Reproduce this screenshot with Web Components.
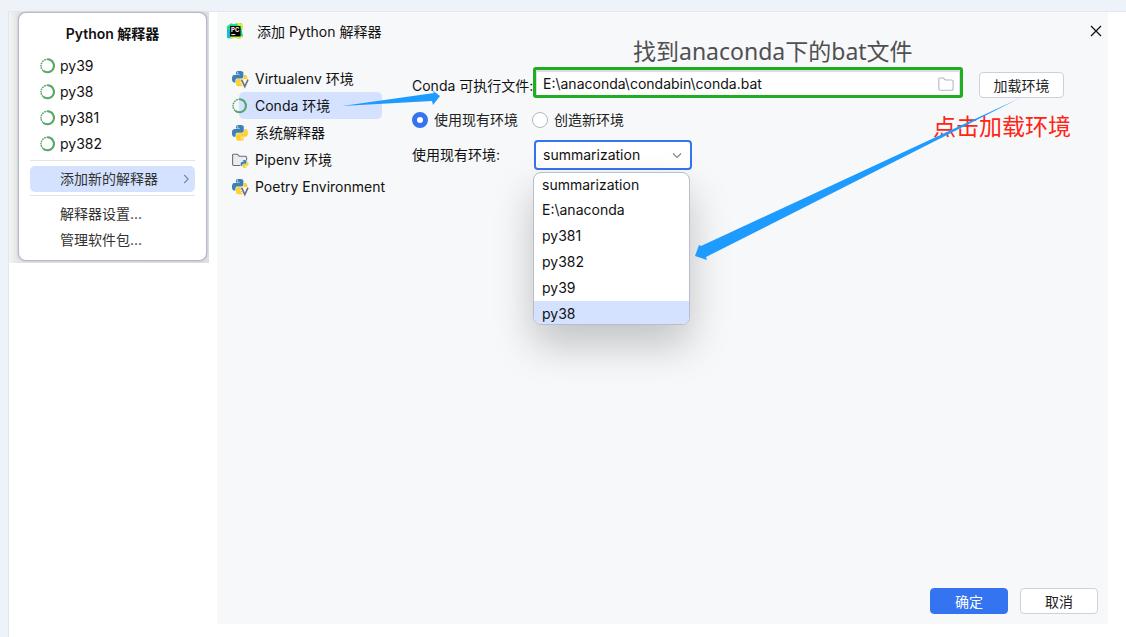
<!DOCTYPE html>
<html lang="zh-CN">
<head>
<meta charset="utf-8">
<meta name="viewport" content="width=device-width, initial-scale=1">
<title>添加 Python 解释器</title>
<style>
  body { margin: 0; font: 14px/20px Inter, "Noto Sans CJK SC", sans-serif; color: #111; }
</style>
</head>
<body>
<guide-page>
  <interpreter-menu slot="menu"></interpreter-menu>
  <interpreter-dialog slot="dialog"></interpreter-dialog>
</guide-page>

<script>
const define = (name, html, setup) => {
  const tpl = document.createElement('template');
  tpl.innerHTML = html;
  customElements.define(name, class extends HTMLElement {
    constructor() {
      super();
      this.attachShadow({ mode: 'open' }).append(tpl.content.cloneNode(true));
    }
    connectedCallback() { if (setup) setup(this, this.shadowRoot); }
  });
};

/* ---------- icons ---------- */
const SNAKE = 'M14.25.18l.9.2.73.26.59.3.45.32.34.34.25.34.16.33.1.3.04.26.02.2-.01.13V8.5l-.05.63-.13.55-.21.46-.26.38-.3.31-.33.25-.35.19-.35.14-.33.1-.3.07-.26.04-.21.02H8.77l-.69.05-.59.14-.5.22-.41.27-.33.32-.27.35-.2.36-.15.37-.1.35-.07.32-.04.27-.02.21v3.06H3.17l-.21-.03-.28-.07-.32-.12-.35-.18-.36-.26-.36-.36-.35-.46-.32-.59-.28-.73-.21-.88-.14-1.05-.05-1.23.06-1.22.16-1.04.24-.87.32-.71.36-.57.4-.44.42-.33.42-.24.4-.16.36-.1.32-.05.24-.01h.16l.06.01h8.16v-.83H6.18l-.01-2.75-.02-.37.05-.34.11-.31.17-.28.25-.26.31-.23.38-.2.44-.18.51-.15.58-.12.64-.1.71-.06.77-.04.84-.02 1.27.05zm-6.3 1.98l-.23.33-.08.41.08.41.23.34.33.22.41.09.41-.09.33-.22.23-.34.08-.41-.08-.41-.23-.33-.33-.22-.41-.09-.41.09z';
const python = t => `<g transform="${t}"><path fill="#3f7fb5" d="${SNAKE}"/><path fill="#ffd02e" transform="rotate(180 12 12)" d="${SNAKE}"/></g>`;
const ICONS = {
  conda: `<circle cx="7.500" cy="7.800" r="6.500" fill="none" stroke="#59a869" stroke-width="1.500" stroke-dasharray="1.700 .7"/>
    <path d="M7.500 1.300a6.500 6.500 0 1 1-4.200 11.500" fill="none" stroke="#59a869" stroke-width="2"/>`,
  python: python('scale(.66)'),
  venv: python('scale(.64)') + `<path d="M8.400 8h8v8.500h-5z" fill="#f7f8fa"/><path d="M9.600 8.700l3.200 7 3.200-7" fill="none" stroke="#6c707e" stroke-width="1.600"/>`,
  pipenv: `<path d="M.6 12.5V3.2a1 1 0 0 1 1-1H5.300l2 2h6.100a1.200 1.200 0 0 1 1.200 1.200V13.500h-13a1 1 0 0 1-1-1z" fill="#ebecf0" stroke="#6c707e" stroke-width="1.1"/><circle cx="12.500" cy="12" r="4.300" fill="#f7f8fa"/>` + python('translate(8.600 8) scale(.33)'),
  folder: `<path d="M.8 13V3.300a1.300 1.300 0 0 1 1.300-1.300h3.300l2 2h6.200a1.500 1.500 0 0 1 1.500 1.500V12.700a1.500 1.500 0 0 1-1.500 1.500H2.200A1.400 1.400 0 0 1 .8 13z" fill="#fff" stroke="#b4b8c4" stroke-width="1.1"/>`,
  chevron: `<path d="M4 6.500l4 4 4-4" fill="none" stroke="#818594" stroke-width="1.100"/>`,
  right: `<path d="M6.200 4l4 4-4 4" fill="none" stroke="#818594" stroke-width="1.100"/>`,
  close: `<path d="M3 3l10 10M13 3L3 13" fill="none" stroke="#111" stroke-width="1.300"/>`,
  pycharm: `<path d="M0 3.500L4 .2l3 1L10 0l5 .5.5 4-.7 3L16 13l-3.500 3-4-1.500L4 15.500 0 15z" fill="#21d789"/><path d="M0 7h5v6L1 15.500z" fill="#16b6e0"/><path d="M9 0h3.500l3 1.500V7L13 4zM3 13h11l2 .5-3.500 2.500-4-1.500L4 15.800z" fill="#d8ee3c"/><rect x="3" y="3" width="10.500" height="10.500" fill="#000"/>
    <text x="4" y="8.600" font-family="Inter, sans-serif" font-weight="700" font-size="6" fill="#fff">PC</text><path d="M4.300 11.600h4" stroke="#fff"/>`
};
define('ui-icon', `<style>:host{display:block;flex:none;width:16px;height:16px}svg{display:block;width:16px;height:16px;overflow:visible}</style><svg viewBox="0 0 16 16" aria-hidden="true"></svg>`,
  (el, root) => { root.querySelector('svg').innerHTML = ICONS[el.getAttribute('name')]; });

/* ---------- page frame ---------- */
define('guide-page', `
<style>
  :host { display: block; box-sizing: border-box; min-height: 100vh; padding: 11px 0 0 8px; background: #eef3f9; }
  main { display: flex; align-items: stretch; gap: 8px; box-sizing: border-box; min-height: calc(100vh - 11px);
    padding: 0 18px 13px 0; background: #fff; border: solid #e0e7ee; border-width: 1px 0 0 1px; }
</style>
<main><slot name="menu"></slot><slot name="dialog"></slot></main>`);

/* ---------- interpreter popup ---------- */
define('menu-item', `
<style>
  :host { display: block; }
  button { display: flex; align-items: center; gap: 4px; width: 100%; height: 26px; padding: 0 1px 0 10px; border: 0;
    border-radius: 5px; background: none; font: inherit; color: inherit; text-align: left; white-space: nowrap; }
  :host([plain]) button { padding-left: 30px; color: #333; }
  :host([active]) button { background: #d4e2ff; }
  span { flex: 1; }
</style>
<button type="button"><slot name="icon"></slot><span><slot></slot></span><slot name="end"></slot></button>`);

define('interpreter-menu', `
<style>
  :host { display: block; flex: none; align-self: flex-start; box-sizing: border-box; width: 200px; padding: 0 2px 2px 9px;
    background: linear-gradient(90deg, #f4f4f4, #e4e4e5 9px, #dedfe2); }
  nav { box-sizing: border-box; padding: 0 11px 7px; border: 1px solid #b6bac9; border-radius: 8px; background: #fff;
    box-shadow: 0 0 2px #a9adbb; }
  h2 { margin: 0; font-size: 14px; line-height: 20px; padding: 11px 0 9px; font-weight: 600; text-align: center; }
  hr { height: 1px; margin: 3px 0 5px; border: 0; background: #e4e5ea; }
</style>
<nav aria-label="Python 解释器">
  <h2>Python 解释器</h2>
  <menu-item><ui-icon slot="icon" name="conda"></ui-icon>py39</menu-item>
  <menu-item><ui-icon slot="icon" name="conda"></ui-icon>py38</menu-item>
  <menu-item><ui-icon slot="icon" name="conda"></ui-icon>py381</menu-item>
  <menu-item><ui-icon slot="icon" name="conda"></ui-icon>py382</menu-item>
  <hr>
  <menu-item plain active>添加新的解释器<ui-icon slot="end" name="right"></ui-icon></menu-item>
  <hr>
  <menu-item plain>解释器设置...</menu-item>
  <menu-item plain>管理软件包...</menu-item>
</nav>`);

/* ---------- dialog parts ---------- */
define('env-tab', `
<style>
  :host { display: block; }
  a { display: flex; align-items: center; gap: 7px; height: 27px; margin-left: 7px; border-radius: 5px; color: #111;
    text-decoration: none; white-space: nowrap; }
  :host([active]) a { background: #d4e2ff; }
  ui-icon { margin-left: -7px; }
</style>
<a href="#"><ui-icon></ui-icon><slot></slot></a>`,
  (el, root) => {
    const icon = document.createElement('ui-icon');
    icon.setAttribute('name', el.getAttribute('icon'));
    root.querySelector('ui-icon').replaceWith(icon);
  });

define('ui-button', `
<style>
  :host { display: block; flex: none; }
  button { box-sizing: border-box; width: 78px; height: 26px; padding: 2px 0 0; border: 1px solid #cfd1da; border-radius: 4px;
    background: #fff; font: inherit; color: #222; }
  :host([wide]) button { width: 85px; }
  :host([primary]) button { border-color: #3574f0; background: #3574f0; color: #fff; }
</style>
<button type="button"><slot></slot></button>`);

define('option-list', `
<style>
  :host { display: block; }
  ul { box-sizing: border-box; width: 157px; margin: 0; padding: 0; overflow: hidden; list-style: none; background: #fff;
    border: 1px solid #b9bdcc; border-radius: 8px; box-shadow: 0 20px 40px rgba(0,0,0,.22); }
  li { padding: 3px 8px; }
  li:first-child { padding: 2px 8px; }
  li[aria-selected=true] { padding-bottom: 0; background: #d4e2ff; }
</style>
<ul role="listbox" aria-label="环境列表">
  <li role="option">summarization</li><li role="option">E:\\anaconda</li><li role="option">py381</li>
  <li role="option">py382</li><li role="option">py39</li><li role="option" aria-selected="true">py38</li>
</ul>`);

define('conda-form', `
<style>
  :host { display: block; }
  form { display: grid; grid-template-columns: 121px minmax(200px, 430px) auto; align-items: center; white-space: nowrap; }
  label[for=exe] { padding-top: 6px; }
  .path { display: flex; align-items: center; box-sizing: border-box; height: 31px; padding: 2px 6px 0 0;
    border: 3px solid #1fae1f; border-radius: 3px; background: #fff; box-shadow: inset 0 1px 0 1px #dcdde4; }
  .path input { flex: 1; min-width: 0; height: 22px; box-sizing: border-box; padding: 0 7px; border: 0; outline: 0; background: none; font: inherit; color: inherit; }
  .load { margin: 5px 0 0 16px; align-self: start; }
  .radios { grid-column: 1 / -1; display: flex; height: 20px; margin: 12px 0 10px; }
  .radios label { display: flex; align-items: center; gap: 6px; min-width: 120px; color: #222; }
  input[type=radio] { appearance: none; box-sizing: border-box; width: 16px; height: 16px; margin: 0; border: 1px solid #b4b8c4; border-radius: 50%; background: #fff; }
  input[type=radio]:checked { border: 5px solid #3574f0; }
  .combo { position: relative; width: 158px; margin-left: 1px; }
  select { appearance: none; display: block; box-sizing: border-box; width: 158px; height: 30px; padding: 0 28px 0 7px; border: 2px solid #3574f0;
    border-radius: 4px; background: #fff; font: inherit; color: inherit; outline: 0; }
  .combo ui-icon { position: absolute; right: 7px; top: 7px; pointer-events: none; }
  option-list { position: absolute; left: -1px; top: 32px; }
</style>
<form>
  <label for="exe">Conda 可执行文件:</label>
  <div class="path"><input id="exe" type="text" value="E:\\anaconda\\condabin\\conda.bat"><ui-icon name="folder"></ui-icon></div>
  <ui-button class="load" wide>加载环境</ui-button>
  <div class="radios">
    <label><input type="radio" name="mode" checked>使用现有环境</label>
    <label><input type="radio" name="mode">创造新环境</label>
  </div>
  <label for="env">使用现有环境:</label>
  <div class="combo">
    <select id="env"><option>summarization</option></select>
    <ui-icon name="chevron"></ui-icon>
    <option-list></option-list>
  </div>
</form>`);

/* Hand-drawn notes laid over the dialog */
define('guide-notes', `
<style>
  :host { display: block; position: absolute; inset: 0; pointer-events: none; font: 23px/30px "Noto Sans", "Noto Sans CJK SC", sans-serif; white-space: nowrap; }
  svg { position: absolute; left: 0; top: 0; width: 860px; height: 270px; }
  p { position: absolute; margin: 0; }
  .file { left: 416px; top: 24px; color: #505052; }
  .load { left: 716px; top: 99px; color: #ff2414; }
</style>
<p class="file">找到anaconda下的bat文件</p>
<p class="load">点击加载环境</p>
<svg viewBox="0 0 860 270" fill="#1e9bff" aria-hidden="true">
  <path d="M125 94L217 81 215 78 223 84 216 93 215 89z"/>
  <path d="M803 86L484 234 482 233 478 244 490 248 489 245z"/>
</svg>`);

define('interpreter-dialog', `
<style>
  :host { display: flex; flex: 1; flex-direction: column; position: relative; min-width: 0; background: #f7f8fa; }
  header { display: flex; align-items: center; gap: 14px; height: 38px; padding: 0 4px 0 10px; }
  h1 { flex: 1; margin: 0; padding-top: 2px; font-size: 14px; line-height: 20px; font-weight: 400; }
  header button { padding: 0; border: 0; background: none; }
  .body { display: flex; flex: 1; gap: 30px; padding: 15px 15px 0; }
  nav { flex: none; width: 150px; }
  conda-form { flex: 1; min-width: 0; padding-top: 2px; }
  footer { display: flex; justify-content: flex-end; gap: 12px; padding: 10px; }
</style>
<header>
  <ui-icon name="pycharm"></ui-icon>
  <h1>添加 Python 解释器</h1>
  <button type="button" aria-label="关闭"><ui-icon name="close"></ui-icon></button>
</header>
<div class="body">
  <nav aria-label="环境类型">
    <env-tab icon="venv">Virtualenv 环境</env-tab>
    <env-tab icon="conda" active>Conda 环境</env-tab>
    <env-tab icon="python">系统解释器</env-tab>
    <env-tab icon="pipenv">Pipenv 环境</env-tab>
    <env-tab icon="venv">Poetry Environment</env-tab>
  </nav>
  <conda-form></conda-form>
</div>
<footer><ui-button primary>确定</ui-button><ui-button>取消</ui-button></footer>
<guide-notes></guide-notes>`);
</script>
</body>
</html>
